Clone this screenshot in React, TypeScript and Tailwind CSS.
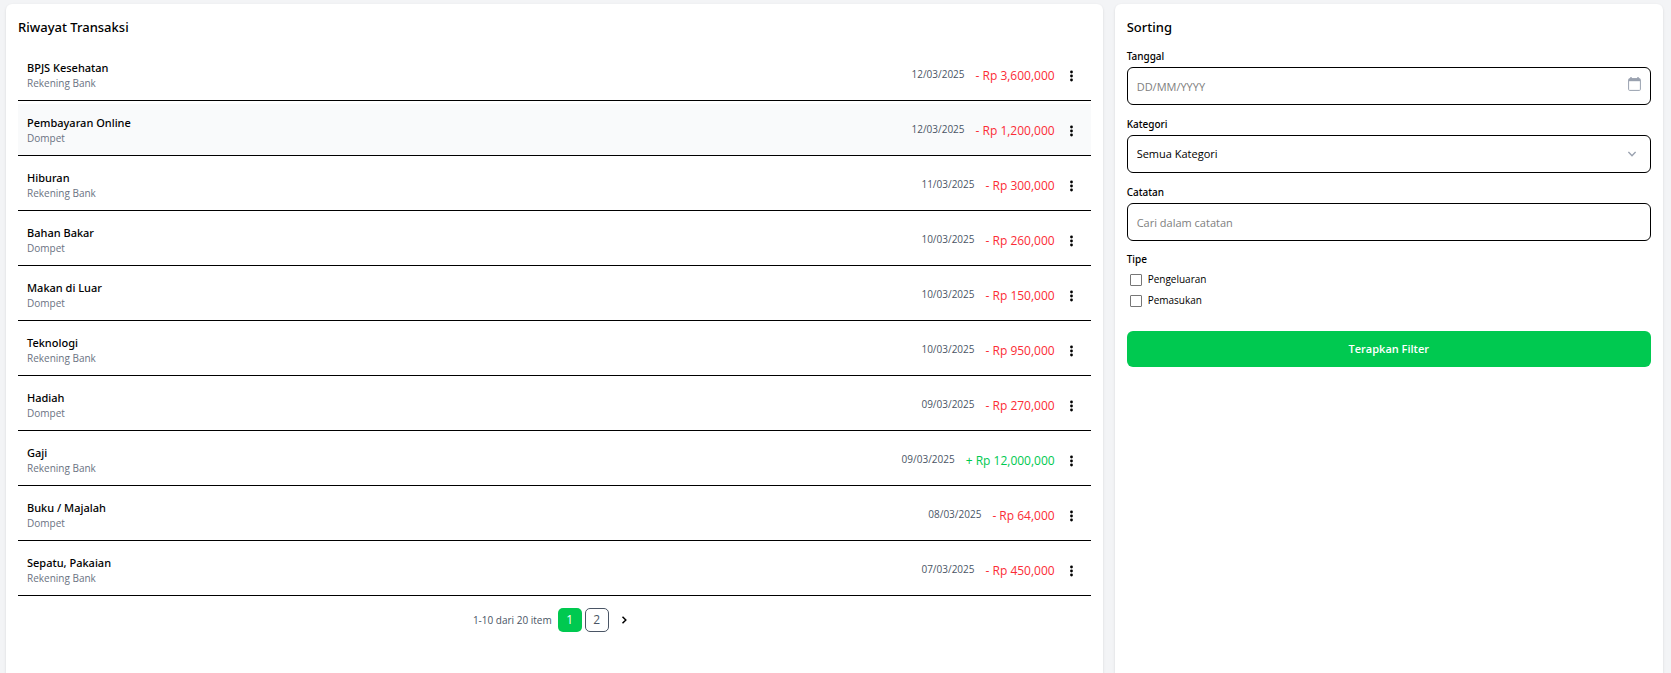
import React from "react";

interface Transaction {
  category: string;
  account: string;
  date: string;
  amount: string;
  income?: boolean;
}

const transactions: Transaction[] = [
  { category: "BPJS Kesehatan", account: "Rekening Bank", date: "12/03/2025", amount: "3,600,000" },
  { category: "Pembayaran Online", account: "Dompet", date: "12/03/2025", amount: "1,200,000" },
  { category: "Hiburan", account: "Rekening Bank", date: "11/03/2025", amount: "300,000" },
  { category: "Bahan Bakar", account: "Dompet", date: "10/03/2025", amount: "260,000" },
  { category: "Makan di Luar", account: "Dompet", date: "10/03/2025", amount: "150,000" },
  { category: "Teknologi", account: "Rekening Bank", date: "10/03/2025", amount: "950,000" },
  { category: "Hadiah", account: "Dompet", date: "09/03/2025", amount: "270,000" },
  { category: "Gaji", account: "Rekening Bank", date: "09/03/2025", amount: "12,000,000", income: true },
  { category: "Buku / Majalah", account: "Dompet", date: "08/03/2025", amount: "64,000" },
  { category: "Sepatu, Pakaian", account: "Rekening Bank", date: "07/03/2025", amount: "450,000" },
];

const mediumFont = "font-['Noto_Sans','Open_Sans',sans-serif] font-medium";
const fieldClass =
  "block h-[38px] w-full rounded-md border border-black bg-white px-[9px] text-[11px] text-black placeholder:text-[#808080]";
const labelClass = `mb-px block text-[10px] leading-[20px] ${mediumFont}`;

function TransactionRow({ item, active }: { item: Transaction; active: boolean }) {
  return (
    <li
      className={`flex items-center justify-between border-b border-black px-[9px] pt-[11px] pb-[10px] hover:bg-gray-50 ${active ? "bg-[#f9fafb]" : ""}`}
    >
      <div>
        <p className={`text-[11px] leading-[16px] ${mediumFont}`}>{item.category}</p>
        <p className="text-[10px] leading-[14px] text-gray-500">{item.account}</p>
      </div>
      <div className="flex items-center pt-[2px]">
        <span className="mr-[11px] pb-1 text-[10px] leading-[14px] text-gray-600">{item.date}</span>
        <span
          className={`text-[12px] leading-[18px] font-medium ${item.income ? "text-[#00c950]" : "text-[#fb2c36]"}`}
        >
          {item.income ? "+" : "-"} Rp {item.amount}
        </span>
        <button type="button" aria-label={`Menu ${item.category}`} className="ml-[5px] px-[5px]">
          <svg viewBox="0 0 12 12" className="size-3" fill="currentColor">
            <circle cx="6.5" cy="2" r="1.4" />
            <circle cx="6.5" cy="6" r="1.4" />
            <circle cx="6.5" cy="10" r="1.4" />
          </svg>
        </button>
      </div>
    </li>
  );
}

function Pagination() {
  return (
    <nav aria-label="Halaman" className="mt-3 flex items-center justify-center text-gray-600">
      <span className="mr-[6px] text-[10px]">1-10 dari 20 item</span>
      <button type="button" aria-current="page" className="mr-[3px] size-6 rounded-[5px] bg-[#00c950] text-[12px] text-white">
        1
      </button>
      <button type="button" className="mr-[3px] size-6 rounded-[5px] border border-gray-600 text-[12px]">
        2
      </button>
      <button type="button" aria-label="Berikutnya" className="flex size-6 items-center justify-center text-black">
        <svg viewBox="0 0 8 8" className="size-2" fill="none" stroke="currentColor" strokeWidth="1.5">
          <path d="M2.5 .8 5.8 4 2.5 7.2" />
        </svg>
      </button>
    </nav>
  );
}

function FilterPanel() {
  return (
    <aside className="rounded-t-md bg-white p-3 shadow-sm">
      <h2 className={`mb-2 text-[13px] leading-[22px] ${mediumFont}`}>Sorting</h2>
      <form>
        <div className="mb-[9px]">
          <label htmlFor="tanggal" className={labelClass}>Tanggal</label>
          <div className="relative">
            <input id="tanggal" type="text" placeholder="DD/MM/YYYY" className={fieldClass} />
            <svg viewBox="0 0 13 14" className="pointer-events-none absolute top-[10px] right-[10px] h-[14px] w-[13px] text-[#99a1af]" fill="none" stroke="currentColor">
              <rect x=".6" y="1.6" width="11.8" height="11.8" rx="1" />
              <path d="M1 3h11" strokeWidth="2.4" />
              <path d="M3 0v2M10 0v2" strokeWidth="1.4" />
            </svg>
          </div>
        </div>
        <div className="mb-[9px]">
          <label htmlFor="kategori" className={labelClass}>Kategori</label>
          <div className="relative">
            <select id="kategori" className={`${fieldClass} appearance-none`}>
              <option>Semua Kategori</option>
            </select>
            <svg viewBox="0 0 8 6" className="pointer-events-none absolute top-4 right-[15px] h-[6px] w-2 text-[#99a1af]" fill="none" stroke="currentColor" strokeWidth="1.4">
              <path d="M.4 .9 4 4.8 7.6 .9" />
            </svg>
          </div>
        </div>
        <div className="mb-[9px]">
          <label htmlFor="catatan" className={labelClass}>Catatan</label>
          <input id="catatan" type="text" placeholder="Cari dalam catatan" className={fieldClass} />
        </div>
        <fieldset className="mb-5">
          <legend className={`text-[10px] leading-[19px] ${mediumFont}`}>Tipe</legend>
          {["Pengeluaran", "Pemasukan"].map((name) => (
            <label key={name} className="flex h-[21px] items-center gap-[6px] pl-[3px] text-[10px]">
              <input type="checkbox" className="size-3 appearance-none rounded-[1px] border border-[#767676] bg-white checked:bg-[#00c950]" />
              {name}
            </label>
          ))}
        </fieldset>
        <button type="submit" className="h-9 w-full rounded-md bg-[#00c950] text-[11px] font-semibold text-white">
          Terapkan Filter
        </button>
      </form>
    </aside>
  );
}

export default function App() {
  return (
    <main className="grid min-h-screen grid-cols-[2fr_1fr] gap-3 bg-gray-100 pt-1 pr-2 pl-[6px] font-['Open_Sans','Noto_Sans',sans-serif] text-black">
      <section className="rounded-t-md bg-white p-3 shadow-sm">
        <h2 className={`mb-[11px] text-[13px] leading-[22px] ${mediumFont}`}>Riwayat Transaksi</h2>
        <ul className="flex flex-col gap-[3px]">
          {transactions.map((item, index) => (
            <TransactionRow key={item.category} item={item} active={index === 1} />
          ))}
        </ul>
        <Pagination />
      </section>
      <FilterPanel />
    </main>
  );
}
